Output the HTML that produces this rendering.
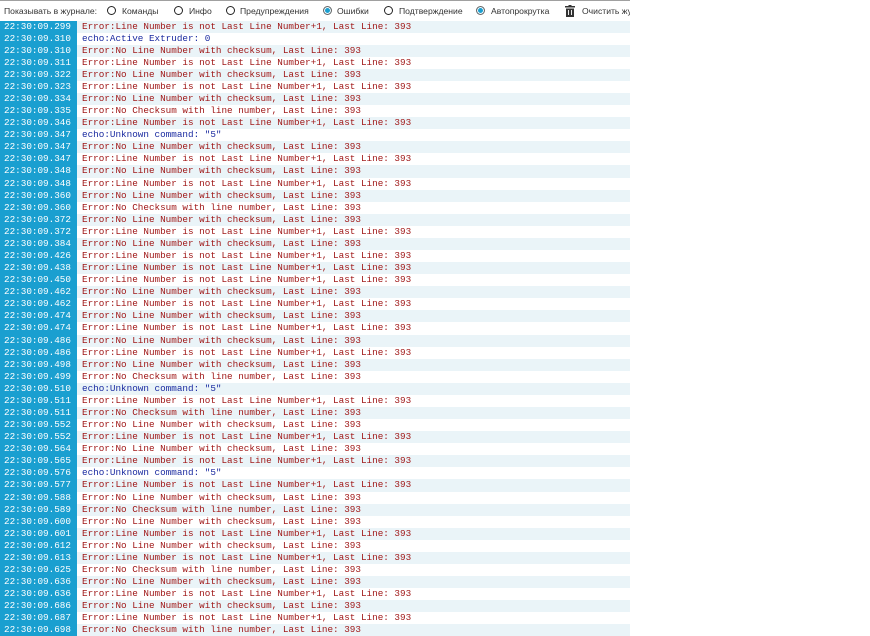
<!DOCTYPE html><html><head><meta charset="utf-8"><style>
body{margin:0;width:870px;height:628px;background:#fff;overflow:hidden;position:relative;font-family:"Liberation Sans",sans-serif}
#tb{position:absolute;left:0;top:0;width:630px;height:20px;border-top:1px solid #a0a0a0;box-sizing:border-box;font-size:8.6px;color:#333;white-space:nowrap;overflow:hidden}
#tb span{position:absolute;top:5px}
.r{position:absolute;top:5px;width:9px;height:9px;border:1.5px solid #222;border-radius:50%;box-sizing:border-box}
.r.on{border-color:#666;background:#1a9fd0;box-shadow:inset 0 0 0 1px #fff}
#log{position:absolute;left:0;top:20.5px;width:630px}
.row{height:12.08px;position:relative;font-family:"Liberation Mono",monospace;font-size:9.3px;line-height:12px;white-space:nowrap}
.row:nth-child(odd){background:#eaf4f8}
.t{position:absolute;left:0;top:0;width:77px;height:100%;background:#1a9fd0;color:#fff;padding-left:4px;box-sizing:border-box}
.m{position:absolute;left:82px;color:#a01818}
.m.e{color:#1a2aa0}
</style></head><body>
<div id="tb">
<span style="left:4px">Показывать в журнале:</span>
<div class="r" style="left:107px"></div><span style="left:122px">Команды</span>
<div class="r" style="left:174px"></div><span style="left:189px">Инфо</span>
<div class="r" style="left:226px"></div><span style="left:240px">Предупреждения</span>
<div class="r on" style="left:323px"></div><span style="left:337px">Ошибки</span>
<div class="r" style="left:384px"></div><span style="left:399px">Подтверждение</span>
<div class="r on" style="left:476px"></div><span style="left:491px">Автопрокрутка</span>
<svg style="position:absolute;left:565px;top:4px" width="10" height="12" viewBox="0 0 10 12"><rect x="0" y="1" width="10" height="1.5" fill="#333"/><rect x="3.5" y="0" width="3" height="1.5" fill="#333"/><path d="M1 3.5h8v8.5h-8z" fill="#333"/><path d="M3.5 5v5M6.5 5v5" stroke="#fff" stroke-width="0.9"/></svg>
<span style="left:582px">Очистить журнал</span>
</div>
<div id="log"></div>
<script>
var A="Error:Line Number is not Last Line Number+1, Last Line: 393",B="Error:No Line Number with checksum, Last Line: 393",C="Error:No Checksum with line number, Last Line: 393",E="echo:Unknown command: \"5\"";
var d=[["299",A],["310","echo:Active Extruder: 0"],["310",B],["311",A],["322",B],["323",A],["334",B],["335",C],["346",A],["347",E],["347",B],["347",A],["348",B],["348",A],["360",B],["360",C],["372",B],["372",A],["384",B],["426",A],["438",A],["450",A],["462",B],["462",A],["474",B],["474",A],["486",B],["486",A],["498",B],["499",C],["510",E],["511",A],["511",C],["552",B],["552",A],["564",B],["565",A],["576",E],["577",A],["588",B],["589",C],["600",B],["601",A],["612",B],["613",A],["625",C],["636",B],["636",A],["686",B],["687",A],["698",C]];
var h="";d.forEach(function(x){h+='<div class="row"><div class="t">22:30:09.'+x[0]+'</div><div class="m'+(x[1].indexOf("echo")==0?' e':'')+'">'+x[1].replace(/"/g,"&quot;")+'</div></div>'});
document.getElementById("log").innerHTML=h;
</script>
</body></html>
